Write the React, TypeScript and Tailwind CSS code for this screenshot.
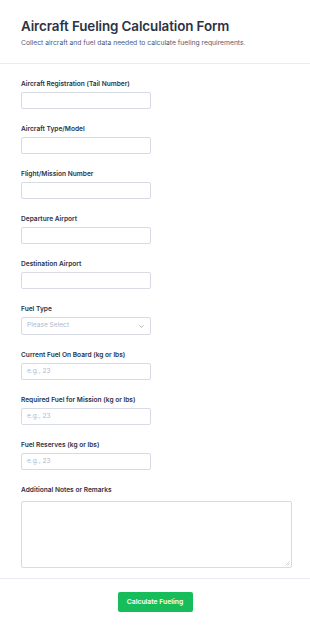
import { ChevronDown } from 'lucide-react'

const font = { fontFamily: 'Inter, "Noto Sans", sans-serif' }

type Field = {
  label: string
  kind: 'text' | 'number' | 'select'
}

const fields: Field[] = [
  { label: 'Aircraft Registration (Tail Number)', kind: 'text' },
  { label: 'Aircraft Type/Model', kind: 'text' },
  { label: 'Flight/Mission Number', kind: 'text' },
  { label: 'Departure Airport', kind: 'text' },
  { label: 'Destination Airport', kind: 'text' },
  { label: 'Fuel Type', kind: 'select' },
  { label: 'Current Fuel On Board (kg or lbs)', kind: 'number' },
  { label: 'Required Fuel for Mission (kg or lbs)', kind: 'number' },
  { label: 'Fuel Reserves (kg or lbs)', kind: 'number' },
]

function FormField({ field }: { field: Field }) {
  return (
    <div className="flex flex-col pb-[16px]">
      <label className="text-[6.6px] leading-[9px] font-semibold text-[#2c3345]">{field.label}</label>
      {field.kind === 'select' ? (
        <div className="mt-[3px] flex h-[18px] w-[130px] items-center justify-between rounded-[2px] border border-[#d8dae5] bg-white px-[5px]">
          <span className="text-[6.6px] text-[#b2b8c9]">Please Select</span>
          <ChevronDown className="h-[7px] w-[7px] text-[#8d93a5]" strokeWidth={2.5} />
        </div>
      ) : (
        <div className="mt-[3px] flex h-[17px] w-[130px] items-center rounded-[2px] border border-[#d8dae5] bg-white px-[5px]">
          {field.kind === 'number' && <span className="text-[6.6px] text-[#b2b8c9]">e.g., 23</span>}
        </div>
      )}
    </div>
  )
}

export default function App() {
  return (
    <div className="min-h-[628px] w-[310px] bg-white" style={font}>
      <header className="px-[21px] pt-[17px] pb-[16px]">
        <h1 className="text-[13.4px] leading-[18px] font-semibold tracking-[-0.1px] text-[#2c3345]">
          Aircraft Fueling Calculation Form
        </h1>
        <p className="mt-[3px] text-[6.75px] leading-[9px] text-[#4f5b78]">
          Collect aircraft and fuel data needed to calculate fueling requirements.
        </p>
      </header>
      <div className="h-px bg-[#eaebf0]" />
      <main className="px-[21px] pt-[16px]">
        {fields.map((f) => (
          <FormField key={f.label} field={f} />
        ))}
        <div className="flex flex-col">
          <label className="text-[6.6px] leading-[9px] font-semibold text-[#2c3345]">Additional Notes or Remarks</label>
          <div className="relative mt-[6px] h-[67px] w-[271px] rounded-[2px] border border-[#d8dae5] bg-white">
            <svg className="absolute right-[1px] bottom-[1px]" width="5" height="5" viewBox="0 0 5 5">
              <path d="M4.5 0.5 L0.5 4.5 M4.5 2.5 L2.5 4.5" stroke="#c4c7d1" strokeWidth="0.8" />
            </svg>
          </div>
        </div>
      </main>
      <div className="mt-[10px] h-px bg-[#eaebf0]" />
      <footer className="flex justify-center pt-[13px] pb-[17px]">
        <button className="h-[20px] w-[75px] rounded-[2px] bg-[#18bd5b] text-[6.8px] font-semibold text-white">
          Calculate Fueling
        </button>
      </footer>
    </div>
  )
}
